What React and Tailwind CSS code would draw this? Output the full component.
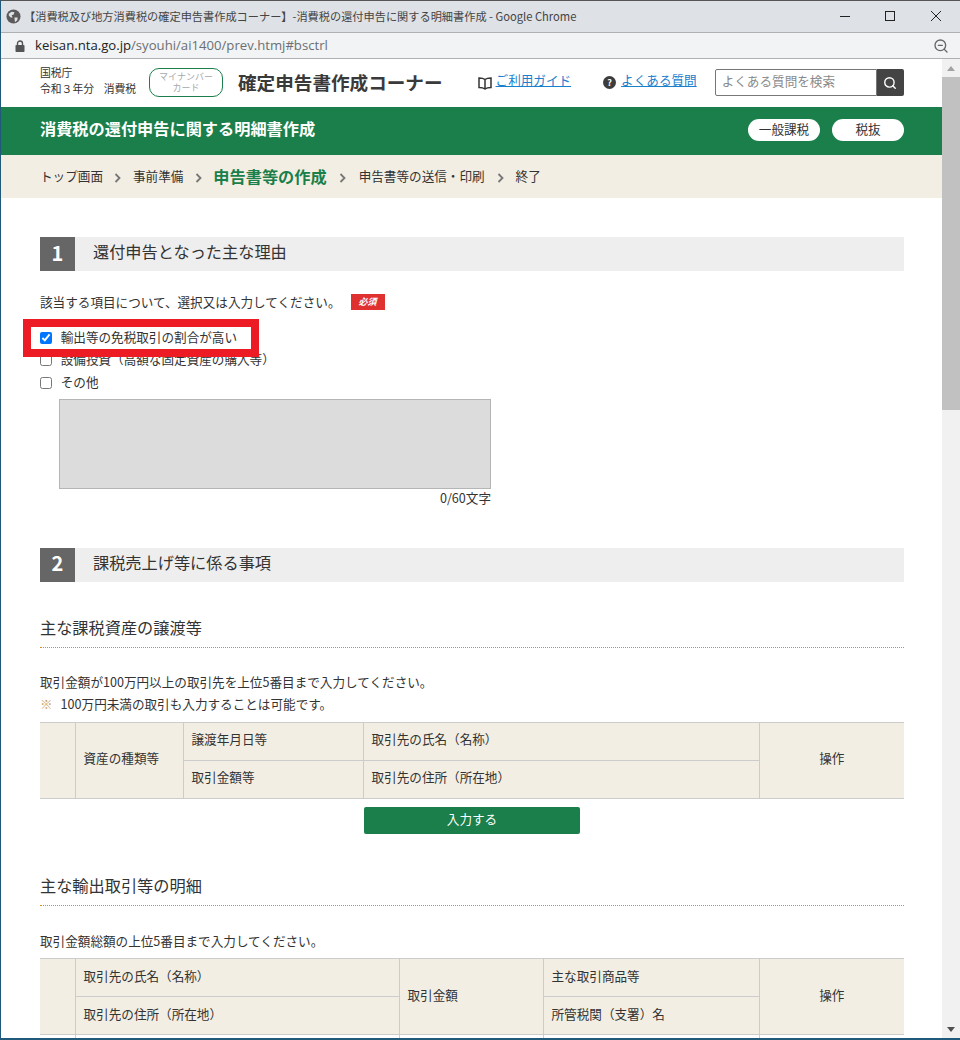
import React from 'react';
import { Search, ZoomOut } from 'lucide-react';

function Chevron({ w }) {
  return (
    <span className={`flex justify-center ${w}`}>
      <svg width="7" height="10" viewBox="0 0 7 10" className="mt-[3px]"><path d="M1.5 1 L5.5 5 L1.5 9" fill="none" stroke="#777" strokeWidth="1.8" /></svg>
    </span>
  );
}

function SectionHead({ n, title, className }) {
  return (
    <div className={`flex h-[34px] bg-[#eeeeee] ${className}`}>
      <div className="flex w-[35px] items-center justify-center bg-[#666666] pb-[3px] text-[20px] font-bold text-white">{n}</div>
      <div className="ml-[18px] text-[16.2px] leading-[28px] text-[#333333]">{title}</div>
    </div>
  );
}

function SubHead({ title, className }) {
  return (
    <div className={`h-[37px] border-b border-dotted border-[#e08a1e] text-[16.2px] leading-[32px] text-[#333333] ${className}`}>{title}</div>
  );
}

const th = 'h-[38px] border border-[#cccccc] bg-[#f2eee3] pb-[3px] pl-[8px] text-left align-middle text-[12.6px] font-normal text-[#333333] first:border-l-0 last:border-r-0';

function Check({ label, checked }) {
  return (
    <label className="flex h-[22.5px] items-center">
      <input type="checkbox" defaultChecked={checked} className="m-0 mt-[1px] h-[11.7px] w-[11.7px]" />
      <span className="ml-[9px]">{label}</span>
    </label>
  );
}

export default function App() {
  return (
    <div className="flex h-[1040px] w-[960px] flex-col overflow-hidden border-b-2 border-l border-t border-b-[#1f5a7a] border-l-[#1f5a7a] border-t-[#555555] bg-white text-[12.6px] text-[#333333] [font-family:'Noto_Sans_CJK_JP','Noto_Sans',sans-serif]">
      {/* title bar */}
      <div className="flex h-[31px] shrink-0 items-center bg-[#dee1e6]">
        <svg width="15" height="15" viewBox="0 0 16 16" className="ml-[5px]">
          <circle cx="8" cy="8" r="7.5" fill="#5a5a5a" />
          <path d="M3 5 L6 3 L9 3.5 L8 6 L6 6.5 L7 9 L5 9 L3 7Z M9 9 L12.5 9 L12 12 L9.5 14 Z" fill="#dee1e6" />
        </svg>
        <span className="ml-[3px] whitespace-nowrap text-[11.2px] text-[#444444]">【消費税及び地方消費税の確定申告書作成コーナー】-消費税の還付申告に関する明細書作成 - Google Chrome</span>
        <div className="ml-auto flex items-center pb-[1px]">
          <svg width="12" height="12" viewBox="0 0 12 12" className="mr-[33px]"><path d="M1 6.5H11" stroke="#222" strokeWidth="1" /></svg>
          <svg width="12" height="12" viewBox="0 0 12 12" className="mr-[34px]"><rect x="1.5" y="1.5" width="9" height="9" fill="none" stroke="#222" strokeWidth="1" /></svg>
          <svg width="12" height="12" viewBox="0 0 12 12" className="mr-[18px]"><path d="M1 1L11 11M11 1L1 11" stroke="#222" strokeWidth="1" /></svg>
        </div>
      </div>
      {/* address bar */}
      <div className="flex h-[27px] shrink-0 items-center border-t border-b border-t-[#aeb0b3] border-b-[#aeb0b3] bg-[#f1f3f4]">
        <svg width="10" height="12" viewBox="0 0 10 12" className="ml-[14px]">
          <path d="M2.5 5.5V3.5a2.5 2.5 0 0 1 5 0V5.5" fill="none" stroke="#555" strokeWidth="1.4" />
          <rect x="0.5" y="5" width="9" height="7" rx="0.8" fill="#555" />
        </svg>
        <span className="ml-[10px] whitespace-nowrap text-[13.15px] text-[#6b6f73] [font-family:'Open_Sans',sans-serif]"><span className="text-[#222222]">keisan.nta.go.jp</span>/syouhi/ai1400/prev.htmj#bsctrl</span>
        <ZoomOut size={16} strokeWidth={2} className="ml-auto mr-[11px] text-[#666666]" />
      </div>
      <div className="flex min-h-0 flex-1">
        {/* page */}
        <div className="w-[941px] shrink-0 overflow-hidden">
          <header className="flex h-[48px] items-start pl-[39px]">
            <div className="mt-[5px] w-[109px] whitespace-pre text-[10.8px] leading-[16px]">{'国税庁\n令和３年分    消費税'}</div>
            <div className="mt-[9px] flex h-[29px] w-[74px] flex-col items-center justify-center rounded-[10px] border border-[#1a7f4b] text-[9px] leading-[10.5px] text-[#a8a8a8]">
              <span>マイナンバー</span><span>カード</span>
            </div>
            <div className="ml-[15px] mt-[8px] whitespace-nowrap text-[18.6px] font-bold leading-[30px] text-[#3a3a3a]">確定申告書作成コーナー</div>
            <svg width="14" height="13" viewBox="0 0 14 13" className="ml-[35px] mt-[18px]">
              <path d="M7 2.5C5.5 1.3 3.5 1 1 1v9.5c2.5 0 4.5.3 6 1.5 1.5-1.2 3.5-1.5 6-1.5V1c-2.5 0-4.5.3-6 1.5ZM7 2.5V12" fill="none" stroke="#333" strokeWidth="1.5" />
            </svg>
            <a className="ml-[4px] mt-[10px] whitespace-nowrap leading-[22px] text-[#1a80cc] underline">ご利用ガイド</a>
            <span className="ml-[32px] mt-[17px] flex h-[13px] w-[13px] items-center justify-center rounded-full bg-[#3c3c3c] text-[9px] font-bold leading-[13px] text-white">?</span>
            <a className="ml-[5px] mt-[10px] whitespace-nowrap leading-[22px] text-[#1a80cc] underline">よくある質問</a>
            <div className="ml-[18px] mt-[10px] flex h-[27px] w-[189px]">
              <div className="flex w-[162px] items-center rounded-l-[2px] border border-[#777777] pb-[2px] pl-[6px] text-[#8a8a8a]">よくある質問を検索</div>
              <div className="flex w-[27px] items-center justify-center rounded-r-[2px] bg-[#444444]"><Search size={14} strokeWidth={2.4} className="text-white" /></div>
            </div>
          </header>
          <div className="flex h-[48px] items-center bg-[#1a7f4b] pl-[39px] pr-[38px]">
            <span className="mb-[5px] text-[16.2px] font-bold text-white">消費税の還付申告に関する明細書作成</span>
            <span className="mb-[2px] ml-auto flex h-[22px] w-[72px] items-center justify-center rounded-full bg-white pb-[2px]">一般課税</span>
            <span className="mb-[2px] ml-[12px] flex h-[22px] w-[72px] items-center justify-center rounded-full bg-white pb-[2px]">税抜</span>
          </div>
          <nav className="flex h-[43px] items-center whitespace-nowrap bg-[#f2eee3] pl-[39px]">
            <span>トップ画面</span>
            <Chevron w="w-[30px]" />
            <span>事前準備</span>
            <Chevron w="w-[30px]" />
            <span className="text-[16.2px] font-bold text-[#1a7f4b]">申告書等の作成</span>
            <Chevron w="w-[32px]" />
            <span>申告書等の送信・印刷</span>
            <Chevron w="w-[31px]" />
            <span>終了</span>
          </nav>
          <main className="pl-[39px] pr-[38px] pt-[39px]">
            <SectionHead n="1" title="還付申告となった主な理由" />
            <div className="mt-[20px] flex h-[22px] items-center">
              <span>該当する項目について、選択又は入力してください。</span>
              <span className="ml-[10px] flex h-[16px] w-[34px] items-center justify-center bg-[#e03131] text-[9px] font-bold italic text-white">必須</span>
            </div>
            <div className="relative mt-[13px]">
              <Check label="輸出等の免税取引の割合が高い" checked />
              <Check label="設備投資（高額な固定資産の購入等）" />
              <Check label="その他" />
              <div className="absolute left-[-17px] top-[-7px] h-[38px] w-[236px] border-[8px] border-[#ed1c24]" />
            </div>
            <div className="ml-[19px] mt-[5px] w-[432px]">
              <div className="h-[90px] border border-[#b5b5b5] bg-[#dcdcdc]" />
              <div className="text-right leading-[18px]">0/60文字</div>
            </div>
            <SectionHead n="2" title="課税売上げ等に係る事項" className="mt-[41px]" />
            <SubHead title="主な課税資産の譲渡等" className="mt-[29px]" />
            <p className="mt-[23px] leading-[22.5px]">取引金額が100万円以上の取引先を上位5番目まで入力してください。</p>
            <p className="leading-[22.5px]"><span className="mr-[8px] text-[#c89a50]">※</span>100万円未満の取引も入力することは可能です。</p>
            <table className="mt-[6px] w-[864px] table-fixed border-collapse">
              <colgroup>
                <col className="w-[35px]" /><col className="w-[108px]" /><col className="w-[180px]" /><col className="w-[396px]" /><col className="w-[145px]" />
              </colgroup>
              <tbody>
                <tr>
                  <th rowSpan={2} className={th}></th>
                  <th rowSpan={2} className={th}>資産の種類等</th>
                  <th className={th}>譲渡年月日等</th>
                  <th className={th}>取引先の氏名（名称）</th>
                  <th rowSpan={2} className={`${th} !pl-0 !text-center`}>操作</th>
                </tr>
                <tr>
                  <th className={th}>取引金額等</th>
                  <th className={th}>取引先の住所（所在地）</th>
                </tr>
              </tbody>
            </table>
            <button className="ml-[324px] mt-[8px] block h-[27px] w-[216px] rounded-[2px] bg-[#1a7f4b] pb-[2px] text-[12.6px] text-white">入力する</button>
            <SubHead title="主な輸出取引等の明細" className="mt-[35px]" />
            <p className="mt-[24px] leading-[22.5px]">取引金額総額の上位5番目まで入力してください。</p>
            <table className="mt-[6px] w-[864px] table-fixed border-collapse">
              <colgroup>
                <col className="w-[35px]" /><col className="w-[324px]" /><col className="w-[144px]" /><col className="w-[216px]" /><col className="w-[145px]" />
              </colgroup>
              <tbody>
                <tr>
                  <th rowSpan={2} className={th}></th>
                  <th className={th}>取引先の氏名（名称）</th>
                  <th rowSpan={2} className={th}>取引金額</th>
                  <th className={th}>主な取引商品等</th>
                  <th rowSpan={2} className={`${th} !pl-0 !text-center`}>操作</th>
                </tr>
                <tr>
                  <th className={th}>取引先の住所（所在地）</th>
                  <th className={th}>所管税関（支署）名</th>
                </tr>
                <tr>
                  <td className="h-[38px] border border-l-0 border-[#cccccc]"></td>
                  <td className="border border-[#cccccc]"></td>
                  <td className="border border-[#cccccc]"></td>
                  <td className="border border-[#cccccc]"></td>
                  <td className="border border-r-0 border-[#cccccc]"></td>
                </tr>
              </tbody>
            </table>
          </main>
        </div>
        {/* scrollbar */}
        <div className="flex w-[18px] shrink-0 flex-col items-center bg-[#f1f1f1]">
          <svg width="8" height="5" viewBox="0 0 8 5" className="mt-[7px]"><path d="M4 0L8 5H0Z" fill="#a3a3a3" /></svg>
          <div className="mt-[6px] h-[333px] w-full bg-[#c1c1c1]" />
          <svg width="8" height="5" viewBox="0 0 8 5" className="mb-[6px] mt-auto"><path d="M0 0H8L4 5Z" fill="#505050" /></svg>
        </div>
      </div>
    </div>
  );
}
